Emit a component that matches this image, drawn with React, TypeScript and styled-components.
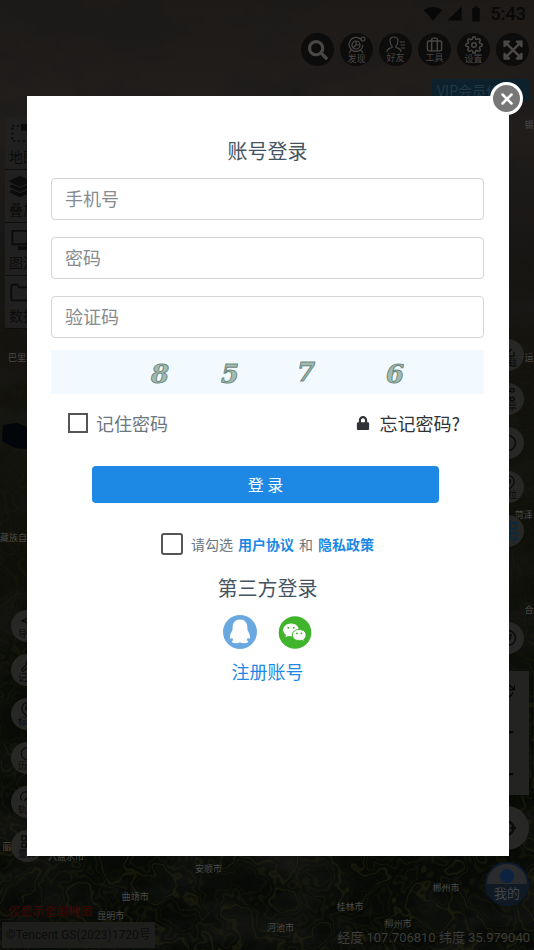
import React, { useState } from "react";
import styled, { createGlobalStyle } from "styled-components";
import {
  FaLock, FaSearch, FaExpandArrowsAlt, FaLayerGroup, FaCrosshairs,
} from "react-icons/fa";
import {
  FiCompass, FiTool, FiMapPin, FiClock, FiShare2, FiUploadCloud, FiNavigation, FiSettings,
  FiBriefcase, FiDownload, FiCircle, FiFolder, FiPlus, FiMinus, FiRotateCw, FiGrid,
} from "react-icons/fi";
import { MdSignalCellular4Bar, MdBatteryFull } from "react-icons/md";

const GlobalStyle = createGlobalStyle`
  *, *::before, *::after { box-sizing: border-box; }
  body {
    margin: 0;
    background: #0b0b07;
    font-family: "Noto Sans CJK SC", "Noto Sans", sans-serif;
  }
  button, input { font-family: inherit; }
`;

const Screen = styled.div`
  display: grid;
  grid-template: 1fr / 1fr;
  min-height: 100vh;
  position: relative;
  overflow: hidden;
  > * { grid-area: 1 / 1; }
`;

const MapLayer = styled.div`
  position: absolute;
  inset: 0;
  background: linear-gradient(#1d1a18 0, #221e1c 12%, #191715 25%, #14130e 38%, #10110a 52%, #0c0e08 66%, #070a05 80%, #060905 100%);
  > svg { position: absolute; inset: 0; width: 100%; height: 100%; }
`;

const PlaceName = styled.span<{ $x: number; $y: number }>`
  position: absolute;
  left: ${(p) => p.$x}%;
  top: ${(p) => p.$y}%;
  font-size: 9px;
  line-height: 12px;
  color: #4a4a48;
  white-space: nowrap;
`;

const Hud = styled.div`
  display: flex;
  flex-direction: column;
  position: relative;
`;

const StatusBar = styled.div`
  display: flex;
  justify-content: flex-end;
  align-items: center;
  gap: 4px;
  height: 27px;
  padding-right: 8px;
  color: #080808;
  font: 500 18px/27px Roboto, sans-serif;
  time { margin-left: 2px; }
`;

const Toolbar = styled.nav`
  display: flex;
  justify-content: flex-end;
  gap: 6px;
  padding: 6px 5px 13px;
`;

const ToolButton = styled.button`
  display: flex;
  flex-direction: column;
  align-items: center;
  justify-content: center;
  width: 33px;
  height: 33px;
  padding: 0;
  border: 0;
  border-radius: 50%;
  background: #0d0c0c;
  color: #4a4745;
  font-size: 9px;
  line-height: 10px;
`;

const Columns = styled.div`
  display: flex;
  flex: 1;
  justify-content: space-between;
`;

const LeftColumn = styled.div`
  display: flex;
  flex-direction: column;
  justify-content: space-between;
  padding: 38px 0 44px 5px;
`;

const RightColumn = styled.div`
  display: flex;
  flex-direction: column;
  align-items: flex-end;
  padding-right: 5px;
`;

const LayerPanel = styled.div`
  display: flex;
  flex-direction: column;
  width: 44px;
  border-radius: 4px;
  background: #212020;
`;

const LayerButton = styled.button`
  display: flex;
  flex-direction: column;
  align-items: flex-start;
  gap: 3px;
  height: 53px;
  padding: 6px 4px 4px;
  border: 0;
  border-bottom: 1px solid #0e0e0d;
  background: none;
  color: #0b0b0b;
  font-size: 14px;
  line-height: 18px;
  white-space: nowrap;
`;

const RoundStack = styled.div`
  display: flex;
  flex-direction: column;
  gap: 12px;
  margin-left: 6px;
`;

const RightStack = styled(RoundStack)`
  margin: 238px 5px 75px 0;
`;

const RoundButton = styled.button<{ $large?: boolean; $tint?: string }>`
  display: flex;
  flex-direction: column;
  align-items: center;
  justify-content: center;
  width: ${(p) => (p.$large ? 44 : 32)}px;
  height: ${(p) => (p.$large ? 44 : 32)}px;
  padding: 0;
  border: 0;
  border-radius: 50%;
  background: #272726;
  color: ${(p) => p.$tint ?? "#0a0a0a"};
  font-size: 9px;
  line-height: 10px;
`;

const CompassButton = styled(RoundButton)`
  margin-right: 5px;
`;

const VipLink = styled.a`
  width: 97px;
  height: 22px;
  padding-left: 5px;
  background: #0c212b;
  color: #1f3945;
  font-size: 14px;
  line-height: 22px;
  text-decoration: none;
  white-space: nowrap;
  overflow: hidden;
`;

const ZoomPanel = styled.div`
  display: flex;
  flex-direction: column;
  justify-content: space-around;
  align-items: center;
  width: 44px;
  height: 124px;
  margin: 17px 0 11px;
  background: #232322;
`;

const ZoomButton = styled.button`
  display: flex;
  padding: 0;
  border: 0;
  background: none;
  color: #060606;
`;

const MineButton = styled.button`
  position: relative;
  width: 44px;
  height: 44px;
  margin-top: 12px;
  padding: 17px 0 0;
  border: 2px solid #0b1b2c;
  border-radius: 50%;
  overflow: hidden;
  background: linear-gradient(#292b2d 50%, #111923 50%);
  color: #42474e;
  font-size: 13px;
  line-height: 16px;
  &::before {
    content: "";
    position: absolute;
    left: 13px;
    top: 5px;
    width: 14px;
    height: 14px;
    border-radius: 50%;
    background: #0b2241;
  }
`;

const Footer = styled.footer`
  display: flex;
  justify-content: space-between;
  align-items: flex-end;
  margin-top: -4px;
  padding: 0 4px 2px 2px;
  color: #3c3c3a;
  font: 13px/20px Roboto, "Noto Sans CJK SC", sans-serif;
  white-space: nowrap;
`;

const Credits = styled.div`
  color: #0c0c0c;
  strong {
    display: block;
    padding-left: 6px;
    color: #3d0505;
    font-size: 12px;
    line-height: 20px;
    font-weight: 400;
  }
  small {
    display: block;
    width: 153px;
    font-size: 12px;
    line-height: 26px;
    padding-left: 4px;
    background: #1e1f1d;
  }
`;

const Overlay = styled.div`
  display: flex;
  position: relative;
  padding: 96px 25px 94px 27px;
`;

const Dialog = styled.section`
  position: relative;
  flex: 1;
  padding: 43px 25px 24px 24px;
  background: #fff;
  color: #45545f;
`;

const CloseButton = styled.button`
  position: absolute;
  top: -14px;
  right: -14px;
  display: flex;
  align-items: center;
  justify-content: center;
  width: 33px;
  height: 33px;
  padding: 0;
  border: 3px solid #fff;
  border-radius: 50%;
  background: #777;
`;

const Form = styled.form`
  display: flex;
  flex-direction: column;
`;

const Title = styled.h1`
  margin: 0 0 15px;
  font-size: 20px;
  line-height: 24px;
  font-weight: 400;
  text-align: center;
`;

const Fields = styled.div`
  display: flex;
  flex-direction: column;
  gap: 17px;
`;

const TextField = styled.input`
  width: 100%;
  height: 42px;
  padding: 0 13px 2px;
  border: 1px solid #d4d4d4;
  border-radius: 4px;
  background: #fff;
  color: #45545f;
  font-size: 18px;
  outline: 0;
  &::placeholder { color: #868b90; opacity: 1; }
`;

const Captcha = styled.button`
  height: 44px;
  margin-top: 12px;
  padding: 0;
  border: 0;
  background: #f2faff;
  svg { display: block; width: 100%; height: 100%; }
`;

const OptionRow = styled.div`
  display: flex;
  justify-content: space-between;
  align-items: center;
  margin: 18px 24px 32px 17px;
`;

const CheckLabel = styled.label`
  display: flex;
  align-items: center;
  gap: 8px;
  color: #6b7680;
  font-size: 18px;
  line-height: 22px;
`;

const CheckBox = styled.input<{ $size: number }>`
  appearance: none;
  flex: none;
  width: ${(p) => p.$size}px;
  height: ${(p) => p.$size}px;
  margin: 0;
  border: 2px solid #555;
  border-radius: ${(p) => (p.$size > 20 ? 3 : 0)}px;
  &:checked { background: #1e88e5; }
`;

const ForgotLink = styled.a`
  display: flex;
  align-items: center;
  gap: 9px;
  color: #2f3337;
  font-size: 18px;
  line-height: 22px;
  text-decoration: none;
`;

const LoginButton = styled.button`
  align-self: center;
  width: 80%;
  height: 37px;
  margin-right: 4px;
  padding: 0 0 2px;
  border: 0;
  border-radius: 4px;
  background: #1e88e5;
  color: #fff;
  font-size: 16px;
  line-height: 34px;
`;

const Agreement = styled.div`
  display: flex;
  justify-content: center;
  align-items: center;
  gap: 5px;
  margin: 30px 0 21px;
  color: #6b7680;
  font-size: 14px;
  line-height: 22px;
  label { display: flex; align-items: center; gap: 8px; }
  a { color: #1e88e5; font-weight: 700; text-decoration: none; }
`;

const Providers = styled.div`
  display: flex;
  justify-content: center;
  gap: 21px;
`;

const ProviderButton = styled.button`
  display: flex;
  padding: 0;
  border: 0;
  border-radius: 50%;
  background: none;
`;

const RegisterLink = styled.a`
  align-self: center;
  margin-top: 10px;
  color: #1e88e5;
  font-size: 18px;
  line-height: 24px;
  text-decoration: none;
`;

const places = [
  { name: "安顺市", x: 36.5, y: 90.8 },
  { name: "曲靖市", x: 22.8, y: 93.8 },
  { name: "昆明市", x: 18.2, y: 95.8 },
  { name: "河池市", x: 50, y: 97 },
  { name: "桂林市", x: 63, y: 94.8 },
  { name: "郴州市", x: 81, y: 92.8 },
  { name: "柳州市", x: 72, y: 96.6 },
  { name: "六盘水市", x: 9, y: 89.6 },
  { name: "丽", x: 0.4, y: 88.5 },
  { name: "藏族自治", x: 0, y: 56 },
  { name: "菏泽", x: 96.4, y: 53.6 },
  { name: "巴里坤", x: 1.5, y: 37.1 },
  { name: "运", x: 98.2, y: 37.1 },
  { name: "锡", x: 98.2, y: 12.5 },
  { name: "合", x: 98.2, y: 63.6 },
];

function Terrain() {
  return (
    <svg aria-hidden="true">
      <defs>
        <filter id="clouds" x="0" y="0" width="100%" height="100%">
          <feTurbulence type="fractalNoise" baseFrequency="0.012 0.02" numOctaves="5" seed="8" />
          <feColorMatrix values="0 0 0 0 0.01  0 0 0 0 0.01  0 0 0 0 0.01  1.8 0 0 0 -0.75" />
        </filter>
        <filter id="ridges" x="0" y="0" width="100%" height="100%" colorInterpolationFilters="sRGB">
          <feTurbulence type="fractalNoise" baseFrequency="0.03" numOctaves="3" seed="21" />
          <feColorMatrix values="0 0 0 0 0.15  0 0 0 0 0.15  0 0 0 0 0.06  1 0 0 0 0" />
          <feComponentTransfer>
            <feFuncA type="table" tableValues="0 0 0 0 0 0 0 0 0 0 0 0 0.2 0 0.1 0.8 0.1 0 0 0.5 0 0 0 0.4 0 0 0 0 0 0 0 0 0 0 0 0" />
          </feComponentTransfer>
        </filter>
        <linearGradient id="fade" x1="0" y1="0" x2="0" y2="1">
          <stop offset="0.25" stopColor="#000" />
          <stop offset="0.6" stopColor="#555" />
          <stop offset="0.9" stopColor="#ccc" />
        </linearGradient>
        <mask id="south"><rect width="100%" height="100%" fill="url(#fade)" /></mask>
      </defs>
      <rect width="100%" height="100%" filter="url(#clouds)" />
      <g mask="url(#south)"><rect width="100%" height="100%" filter="url(#ridges)" /></g>
      <path d="M3 425l14-2 10 4v22l-12-1-13-7z" fill="#020509" />
    </svg>
  );
}

function CaptchaDrawing() {
  const digits = [["8", 100], ["5", 170], ["7", 246], ["6", 335]] as const;
  return (
    <svg viewBox="0 0 433 44" preserveAspectRatio="xMidYMid meet">
      <g fontFamily="DejaVu Serif, serif" fontWeight="700" fontStyle="italic" fontSize="26" fill="#a3bab2" stroke="#6d8a7f" strokeWidth="1">
        {digits.map(([d, x]) => <text key={d} x={x} y={d === "7" ? 31 : 33}>{d}</text>)}
      </g>
    </svg>
  );
}

function QQIcon() {
  return (
    <svg width="34" height="34" viewBox="0 0 34 34">
      <circle cx="17" cy="17" r="17" fill="#6aa9e0" />
      <path fill="#fff" d="M17 4.500c-4.600 0-7.400 3.300-7.400 8 0 1.200.1 2-.2 2.800-1.600 2.600-2.500 5-2.500 7.200 0 1.600.7 1.800 2.200.2.300 1 .8 1.800 1.400 2.500-1.200.4-1.700 1-1.700 1.600 0 1.700 5.800 1.900 8.200.4 2.400 1.500 8.200 1.300 8.200-.4 0-.6-.5-1.200-1.700-1.600.6-.7 1.100-1.500 1.400-2.500 1.500 1.600 2.200 1.400 2.200-.2 0-2.200-.9-4.600-2.500-7.200-.3-.8-.2-1.600-.2-2.800 0-4.700-2.800-8-7.400-8z" />
    </svg>
  );
}

function WeChatIcon() {
  return (
    <svg width="34" height="34" viewBox="0 0 34 34">
      <circle cx="17" cy="17.500" r="16.300" fill="#40b42d" />
      <path fill="#fff" d="M13 8.500c-4.500 0-7.800 2.900-7.800 6.400 0 2.100 1.100 3.800 2.900 5l-.8 2.400 2.800-1.400c.9.300 1.900.4 2.900.4 4.500 0 7.800-2.800 7.800-6.400S17.500 8.500 13 8.500z" />
      <path fill="#fff" stroke="#40b42d" strokeWidth="1" d="M21.200 14.400c-4 0-6.900 2.500-6.900 5.600s2.900 5.700 6.900 5.700c.9 0 1.800-.1 2.600-.4l2.600 1.400-.7-2.200c1.500-1 2.400-2.600 2.400-4.500 0-3.100-2.900-5.600-6.900-5.600z" />
      <g fill="#40b42d">
        <circle cx="10.300" cy="12.800" r="1" /><circle cx="15.700" cy="12.800" r="1" />
        <circle cx="18.900" cy="18.400" r="0.900" /><circle cx="23.400" cy="18.400" r="0.900" />
      </g>
    </svg>
  );
}

function WifiIcon() {
  return (
    <svg width="18" height="14" viewBox="0 0 18 14"><path d="M0 3Q9-3 18 3L9 14z" fill="currentColor" /></svg>
  );
}

function FriendIcon() {
  return (
    <svg width="20" height="17" viewBox="0 0 20 17" fill="none" stroke="currentColor" strokeWidth="1.200">
      <path d="M1 16c0-3 2-3.600 5-4.500v-1.500C4.500 8.500 4 7 4 5c0-2.500 1.500-4 4-4s4 1.500 4 4c0 2-.5 3.500-2 5v1.500c3 .9 5 1.500 5 4.500M14 6h5M14.500 9H19M15 12h4" />
    </svg>
  );
}

function DiscoverIcon() {
  return (
    <svg width="19" height="18" viewBox="0 0 19 18" fill="none" stroke="currentColor" strokeWidth="1.200">
      <path d="M14 3.500A7 7 0 1 0 16 9M9 5v4h4M9 9l-3 3M4 14l-2 3M14 14l2 3" />
      <circle cx="9" cy="9" r="4" /><circle cx="16" cy="3" r="2" />
    </svg>
  );
}

function AreaIcon() {
  return (
    <svg width="22" height="22" viewBox="0 0 22 22">
      <path d="M3 3h16v16H3z" fill="none" stroke="currentColor" strokeWidth="2" strokeDasharray="2 3" />
      <path d="M12 1h8v7h-8z" fill="currentColor" />
    </svg>
  );
}

function SourceIcon() {
  return (
    <svg width="22" height="22" viewBox="0 0 22 22">
      <path d="M3 2h16v14H3z" fill="none" stroke="currentColor" strokeWidth="2" />
      <path d="M9 18h12v4H9z" fill="currentColor" />
    </svg>
  );
}

export default function App() {
  const [open, setOpen] = useState(true);
  return (
    <>
      <GlobalStyle />
      <Screen>
        <MapLayer>
          <Terrain />
          {places.map((p) => <PlaceName key={p.name} $x={p.x} $y={p.y}>{p.name}</PlaceName>)}
        </MapLayer>
        <Hud inert={open}>
          <StatusBar>
            <WifiIcon />
            <MdSignalCellular4Bar size={17} />
            <MdBatteryFull size={18} />
            <time>5:43</time>
          </StatusBar>
          <Toolbar>
            <ToolButton aria-label="搜索"><FaSearch size={20} /></ToolButton>
            <ToolButton><DiscoverIcon />发现</ToolButton>
            <ToolButton><FriendIcon />好友</ToolButton>
            <ToolButton><FiBriefcase size={17} />工具</ToolButton>
            <ToolButton><FiSettings size={18} />设置</ToolButton>
            <ToolButton aria-label="全屏"><FaExpandArrowsAlt size={22} /></ToolButton>
          </Toolbar>
          <Columns>
            <LeftColumn>
              <LayerPanel>
                <LayerButton><AreaIcon />地图</LayerButton>
                <LayerButton><FaLayerGroup size={22} />叠加</LayerButton>
                <LayerButton><SourceIcon />图源</LayerButton>
                <LayerButton><FiFolder size={22} />数据</LayerButton>
              </LayerPanel>
              <RoundStack>
                <RoundButton><FiNavigation size={15} />导航</RoundButton>
                <RoundButton><FiTool size={15} />记录</RoundButton>
                <RoundButton><FiMapPin size={15} />标点</RoundButton>
                <RoundButton><FiClock size={15} />历史</RoundButton>
                <RoundButton><FiUploadCloud size={15} />轨迹</RoundButton>
                <RoundButton><FiGrid size={15} />量算</RoundButton>
              </RoundStack>
            </LeftColumn>
            <RightColumn>
              <VipLink href="#vip">VIP会员价格</VipLink>
              <RightStack>
                <RoundButton><FiDownload size={15} />下载</RoundButton>
                <RoundButton><FiShare2 size={15} />分享</RoundButton>
                <RoundButton aria-label="圆"><FiCircle size={18} /></RoundButton>
                <RoundButton><FiMapPin size={15} />定位</RoundButton>
                <RoundButton aria-label="图例" $tint="#0b2a42"><FiGrid size={22} /></RoundButton>
              </RightStack>
              <CompassButton aria-label="指北"><FiCompass size={18} /></CompassButton>
              <ZoomPanel>
                <ZoomButton aria-label="旋转"><FiRotateCw size={16} /></ZoomButton>
                <ZoomButton aria-label="放大"><FiPlus size={18} strokeWidth={3} /></ZoomButton>
                <ZoomButton aria-label="缩小"><FiMinus size={18} strokeWidth={3} /></ZoomButton>
              </ZoomPanel>
              <RoundButton $large aria-label="我的位置"><FaCrosshairs size={18} /></RoundButton>
              <MineButton>我的</MineButton>
            </RightColumn>
          </Columns>
          <Footer>
            <Credits>
              <strong>仅显示全国地图</strong>
              <small>©Tencent GS(2023)1720号</small>
            </Credits>
            <span>经度 107.706810 纬度 35.979040</span>
          </Footer>
        </Hud>
        {open && (
          <Overlay>
            <Dialog role="dialog" aria-modal="true" aria-labelledby="login-title">
              <CloseButton aria-label="关闭" onClick={() => setOpen(false)}>
                <svg width="12" height="12" viewBox="0 0 12 12" stroke="#fff" strokeWidth="2.500" strokeLinecap="round">
                  <path d="M1.500 1.500l9 9M10.500 1.500l-9 9" />
                </svg>
              </CloseButton>
              <Form onSubmit={(e) => e.preventDefault()}>
                <Title id="login-title">账号登录</Title>
                <Fields>
                  <TextField type="tel" placeholder="手机号" aria-label="手机号" />
                  <TextField type="password" placeholder="密码" aria-label="密码" />
                  <TextField placeholder="验证码" aria-label="验证码" />
                </Fields>
                <Captcha type="button" aria-label="刷新验证码"><CaptchaDrawing /></Captcha>
                <OptionRow>
                  <CheckLabel><CheckBox type="checkbox" $size={20} />记住密码</CheckLabel>
                  <ForgotLink href="#forgot"><FaLock size={14} />忘记密码?</ForgotLink>
                </OptionRow>
                <LoginButton type="submit">登 录</LoginButton>
                <Agreement>
                  <label><CheckBox type="checkbox" $size={22} />请勾选</label>
                  <a href="#terms">用户协议</a>
                  <span>和</span>
                  <a href="#privacy">隐私政策</a>
                </Agreement>
                <Title as="h2">第三方登录</Title>
                <Providers>
                  <ProviderButton type="button" aria-label="QQ登录"><QQIcon /></ProviderButton>
                  <ProviderButton type="button" aria-label="微信登录"><WeChatIcon /></ProviderButton>
                </Providers>
                <RegisterLink href="#register">注册账号</RegisterLink>
              </Form>
            </Dialog>
          </Overlay>
        )}
      </Screen>
    </>
  );
}
